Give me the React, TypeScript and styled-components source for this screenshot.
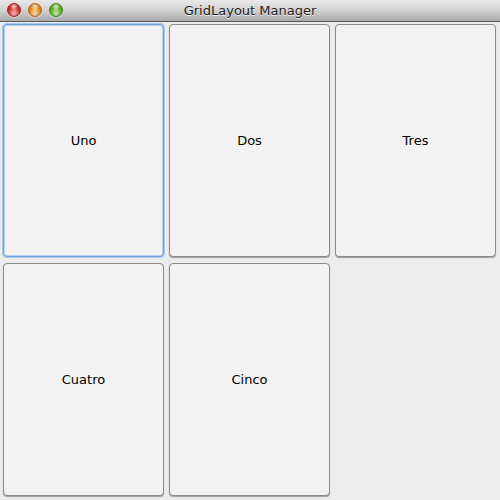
import React from 'react';
import styled, {createGlobalStyle} from "styled-components";

const GlobalStyle = createGlobalStyle`
  html, body {
    margin: 0;
    padding: 0;
    background: #ececec;
  }
`;

const Window = styled.div`
  width: 500px;
  height: 500px;
  display: flex;
  flex-direction: column;
  background: #ececec;
  font-family: "DejaVu Sans", "Liberation Sans", sans-serif;
  overflow: hidden;
`;

const TitleBar = styled.div`
  position: relative;
  height: 21px;
  flex-shrink: 0;
  background: linear-gradient(#e9e9e9, #d0d0d0 50%, #a9a9a9);
  border-bottom: 1px solid #575757;
  display: flex;
  align-items: center;
  justify-content: center;
`;

const Lights = styled.div`
  position: absolute;
  left: 7px;
  top: 3px;
  display: flex;
  gap: 7px;
`;

const Light = styled.div<{ color: string; dark: string }>`
  width: 14px;
  height: 14px;
  border-radius: 50%;
  box-sizing: border-box;
  border: 1px solid ${props => props.dark};
  background: radial-gradient(circle at 50% 20%, #ffffffcc 0, transparent 35%),
    radial-gradient(circle at 50% 80%, #ffffffaa 0, transparent 50%),
    radial-gradient(circle at 50% 50%, ${props => props.color}, ${props => props.dark});
  box-shadow: 0 1px 0 #fff6;
`;

const Title = styled.div`
  font-size: 13px;
  color: #222;
  text-shadow: 0 1px 0 #f2f2f2;
`;

const Grid = styled.div`
  flex: 1;
  display: grid;
  grid-template-columns: repeat(3, 1fr);
  grid-template-rows: repeat(2, 1fr);
  gap: 6px 5px;
  padding: 2px 4px 4px 3px;
`;

const Button = styled.div<{ focused?: boolean }>`
  box-sizing: border-box;
  border-radius: 4px;
  background: #f2f2f2;
  border: 1px solid ${props => props.focused ? "#6f9fd6" : "#8a8a8a"};
  box-shadow: ${props => props.focused
    ? "0 0 0 1px #a9c7ea, inset 0 0 0 1px #b9d3ef"
    : "0 1px 1px #0005"};
  display: flex;
  align-items: center;
  justify-content: center;
  font-size: 13px;
  color: #000;
`;

const labels = ["Uno", "Dos", "Tres", "Cuatro", "Cinco"];

function App() {
    return (
        <>
            <GlobalStyle/>
            <Window>
                <TitleBar>
                    <Lights>
                        <Light color="#f5453d" dark="#a3221c"/>
                        <Light color="#f7a83a" dark="#b36b12"/>
                        <Light color="#78c83e" dark="#3d8a1a"/>
                    </Lights>
                    <Title>GridLayout Manager</Title>
                </TitleBar>
                <Grid>
                    {labels.map((label, i) =>
                        <Button key={label} focused={i === 0}>{label}</Button>
                    )}
                </Grid>
            </Window>
        </>
    );
}

export default App;
